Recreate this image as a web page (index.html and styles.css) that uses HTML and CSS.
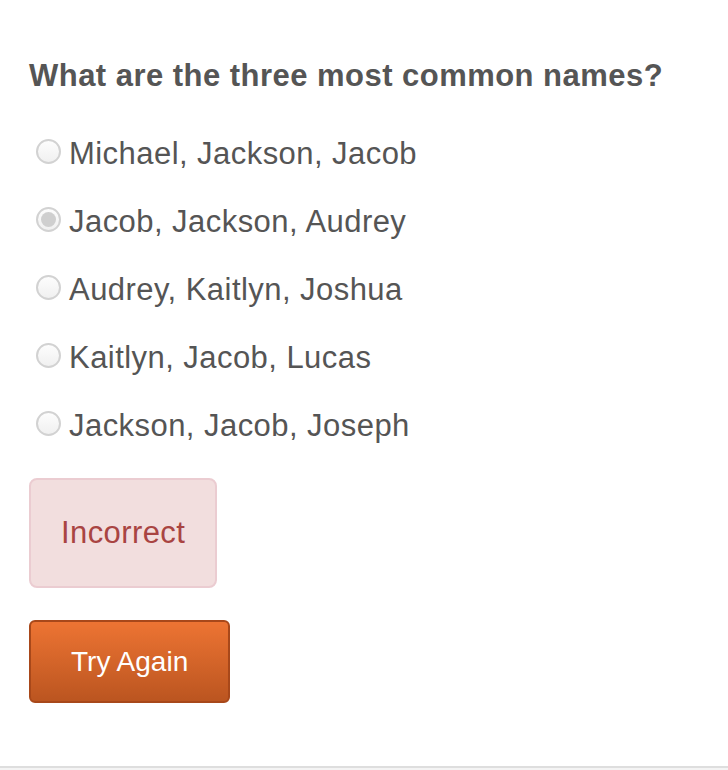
FILE: index.html
```html
<!DOCTYPE html>
<html lang="en">
<head>
<meta charset="utf-8">
<title>Quiz</title>
<link rel="stylesheet" href="styles.css">
</head>
<body>
<main class="quiz">
  <h1 class="question">What are the three most common names?</h1>
  <ul class="options">
    <li class="option"><span class="radio"></span><span class="label">Michael, Jackson, Jacob</span></li>
    <li class="option"><span class="radio checked"></span><span class="label">Jacob, Jackson, Audrey</span></li>
    <li class="option"><span class="radio"></span><span class="label">Audrey, Kaitlyn, Joshua</span></li>
    <li class="option"><span class="radio"></span><span class="label">Kaitlyn, Jacob, Lucas</span></li>
    <li class="option"><span class="radio"></span><span class="label">Jackson, Jacob, Joseph</span></li>
  </ul>
  <div class="result"><div class="alert">Incorrect</div></div>
  <div class="actions"><button class="btn">Try Again</button></div>
</main>
<footer class="footer"></footer>
</body>
</html>
```
FILE: styles.css
```css
html, body {
  margin: 0;
  padding: 0;
  background: #ffffff;
}
body {
  font-family: "Liberation Sans", Arial, Helvetica, sans-serif;
  color: #555555;
}
.quiz {
  padding: 58px 0 0 29px;
  height: 708px;
}
.question {
  margin: 0;
  font-size: 31px;
  line-height: 36px;
  font-weight: bold;
  letter-spacing: 0.47px;
  color: #555555;
}
.options {
  list-style: none;
  margin: 42px 0 0 0;
  padding: 0;
  display: flex;
  flex-direction: column;
  gap: 32px;
}
.option {
  display: flex;
  align-items: flex-start;
  gap: 8px;
  height: 36px;
}
.radio {
  box-sizing: border-box;
  width: 25px;
  height: 25px;
  margin: 3px 0 0 7px;
  border: 2px solid #d2d2d2;
  border-radius: 50%;
  background: linear-gradient(#fdfdfd, #f0f0f0);
  display: flex;
  align-items: center;
  justify-content: center;
  flex: none;
}
.radio.checked::after {
  content: "";
  width: 15px;
  height: 15px;
  border-radius: 50%;
  background: #cfcfcf;
}
.label {
  font-size: 31px;
  line-height: 36px;
  letter-spacing: 0.45px;
  color: #555555;
}
.result {
  margin-top: 34px;
  display: flex;
}
.alert {
  border: 2px solid #ebccd1;
  background: #f2dede;
  color: #a94442;
  border-radius: 8px;
  padding: 30px;
  font-size: 31px;
  line-height: 46px;
  letter-spacing: 0.4px;
}
.actions {
  margin-top: 32px;
  display: flex;
}
.btn {
  font-family: "Liberation Sans", Arial, Helvetica, sans-serif;
  font-size: 28px;
  line-height: 39px;
  height: 83px;
  color: #ffffff;
  padding: 20px 40px;
  border: 2px solid #a8481a;
  border-radius: 6px;
  background: linear-gradient(#ed7433, #bb5520);
  cursor: pointer;
}
.footer {
  height: 2px;
  border-top: 2px solid #dedede;
  background: #f4f4f4;
}
```
